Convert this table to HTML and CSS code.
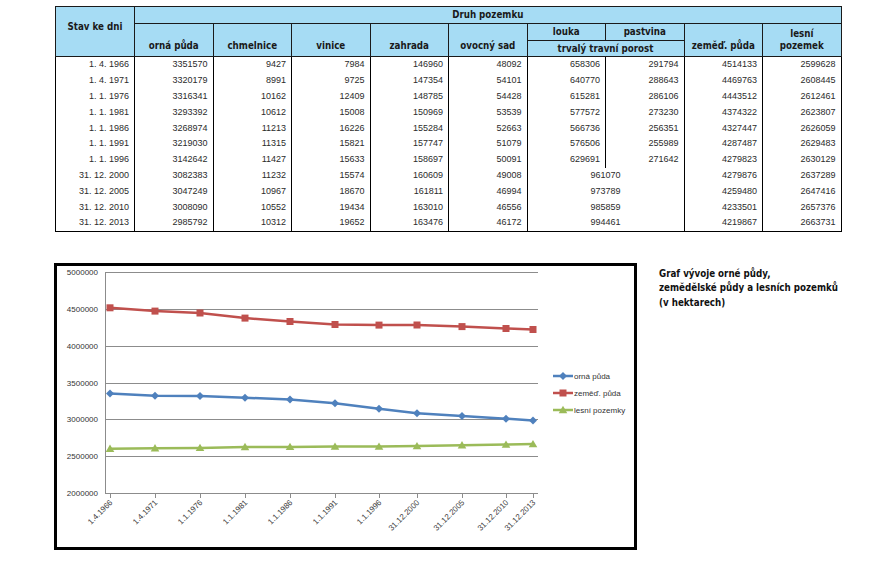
FILE: index.html
```html
<!DOCTYPE html>
<html lang="cs">
<head>
<meta charset="utf-8">
<title>Druh pozemku</title>
<link rel="stylesheet" href="styles.css">
</head>
<body>
<div class="page">
  <table class="land">
    <colgroup>
      <col class="c-first"><col><col><col><col><col><col><col><col><col>
    </colgroup>
    <thead>
      <tr class="h1">
        <th rowspan="3" class="stav">Stav ke dni</th>
        <th colspan="9">Druh pozemku</th>
      </tr>
      <tr class="h2">
        <th rowspan="2" class="low">orná půda</th>
        <th rowspan="2" class="low">chmelnice</th>
        <th rowspan="2" class="low">vinice</th>
        <th rowspan="2" class="low">zahrada</th>
        <th rowspan="2" class="low">ovocný sad</th>
        <th>louka</th>
        <th>pastvina</th>
        <th rowspan="2" class="low">zeměď. půda</th>
        <th rowspan="2" class="low">lesní<br>pozemek</th>
      </tr>
      <tr class="h3">
        <th colspan="2">trvalý travní porost</th>
      </tr>
    </thead>
    <tbody>
      <tr><td>1. 4. 1966</td><td>3351570</td><td>9427</td><td>7984</td><td>146960</td><td>48092</td><td>658306</td><td>291794</td><td>4514133</td><td>2599628</td></tr>
      <tr><td>1. 4. 1971</td><td>3320179</td><td>8991</td><td>9725</td><td>147354</td><td>54101</td><td>640770</td><td>288643</td><td>4469763</td><td>2608445</td></tr>
      <tr><td>1. 1. 1976</td><td>3316341</td><td>10162</td><td>12409</td><td>148785</td><td>54428</td><td>615281</td><td>286106</td><td>4443512</td><td>2612461</td></tr>
      <tr><td>1. 1. 1981</td><td>3293392</td><td>10612</td><td>15008</td><td>150969</td><td>53539</td><td>577572</td><td>273230</td><td>4374322</td><td>2623807</td></tr>
      <tr><td>1. 1. 1986</td><td>3268974</td><td>11213</td><td>16226</td><td>155284</td><td>52663</td><td>566736</td><td>256351</td><td>4327447</td><td>2626059</td></tr>
      <tr><td>1. 1. 1991</td><td>3219030</td><td>11315</td><td>15821</td><td>157747</td><td>51079</td><td>576506</td><td>255989</td><td>4287487</td><td>2629483</td></tr>
      <tr><td>1. 1. 1996</td><td>3142642</td><td>11427</td><td>15633</td><td>158697</td><td>50091</td><td>629691</td><td>271642</td><td>4279823</td><td>2630129</td></tr>
      <tr><td>31. 12. 2000</td><td>3082383</td><td>11232</td><td>15574</td><td>160609</td><td>49008</td><td colspan="2" class="merged">961070</td><td>4279876</td><td>2637289</td></tr>
      <tr><td>31. 12. 2005</td><td>3047249</td><td>10967</td><td>18670</td><td>161811</td><td>46994</td><td colspan="2" class="merged">973789</td><td>4259480</td><td>2647416</td></tr>
      <tr><td>31. 12. 2010</td><td>3008090</td><td>10552</td><td>19434</td><td>163010</td><td>46556</td><td colspan="2" class="merged">985859</td><td>4233501</td><td>2657376</td></tr>
      <tr><td>31. 12. 2013</td><td>2985792</td><td>10312</td><td>19652</td><td>163476</td><td>46172</td><td colspan="2" class="merged">994461</td><td>4219867</td><td>2663731</td></tr>
    </tbody>
  </table>

  <div class="lower">
    <div class="chart">
      <svg class="chart-svg" width="577" height="281" viewBox="57 265 577 281" xmlns="http://www.w3.org/2000/svg">
        <defs>
          <path id="dia" d="M0,-4 L4,0 L0,4 L-4,0Z"/>
          <rect id="sq" x="-3.5" y="-3.5" width="7" height="7"/>
          <path id="tri" d="M0,-4.2 L4.3,3.2 L-4.3,3.2Z"/>
        </defs>
        <g stroke="#8c8c8c" stroke-width="1" shape-rendering="crispEdges">
          <line x1="105" y1="271.5" x2="538" y2="271.5"/>
          <line x1="105" y1="308.5" x2="538" y2="308.5"/>
          <line x1="105" y1="345.5" x2="538" y2="345.5"/>
          <line x1="105" y1="382.5" x2="538" y2="382.5"/>
          <line x1="105" y1="418.5" x2="538" y2="418.5"/>
          <line x1="105" y1="455.5" x2="538" y2="455.5"/>
          <line x1="105" y1="492.5" x2="538" y2="492.5"/>
          <line x1="105.5" y1="271" x2="105.5" y2="492"/>
          <line x1="110.5" y1="492" x2="110.5" y2="497"/>
          <line x1="155.5" y1="492" x2="155.5" y2="497"/>
          <line x1="200.5" y1="492" x2="200.5" y2="497"/>
          <line x1="245.5" y1="492" x2="245.5" y2="497"/>
          <line x1="290.5" y1="492" x2="290.5" y2="497"/>
          <line x1="335.5" y1="492" x2="335.5" y2="497"/>
          <line x1="379.5" y1="492" x2="379.5" y2="497"/>
          <line x1="417.5" y1="492" x2="417.5" y2="497"/>
          <line x1="462.5" y1="492" x2="462.5" y2="497"/>
          <line x1="506.5" y1="492" x2="506.5" y2="497"/>
          <line x1="533.5" y1="492" x2="533.5" y2="497"/>
        </g>
        <g class="ylab" text-anchor="end">
          <text x="98" y="274">5000000</text>
          <text x="98" y="311">4500000</text>
          <text x="98" y="348">4000000</text>
          <text x="98" y="385">3500000</text>
          <text x="98" y="421">3000000</text>
          <text x="98" y="458">2500000</text>
          <text x="98" y="495">2000000</text>
        </g>
        <g class="xlab" text-anchor="end">
          <text transform="translate(113,502) rotate(-45)">1.4.1966</text>
          <text transform="translate(158,502) rotate(-45)">1.4.1971</text>
          <text transform="translate(203,502) rotate(-45)">1.1.1976</text>
          <text transform="translate(248,502) rotate(-45)">1.1.1981</text>
          <text transform="translate(293,502) rotate(-45)">1.1.1986</text>
          <text transform="translate(338,502) rotate(-45)">1.1.1991</text>
          <text transform="translate(382,502) rotate(-45)">1.1.1996</text>
          <text transform="translate(420,502) rotate(-45)">31.12.2000</text>
          <text transform="translate(465,502) rotate(-45)">31.12.2005</text>
          <text transform="translate(509,502) rotate(-45)">31.12.2010</text>
          <text transform="translate(536,502) rotate(-45)">31.12.2013</text>
        </g>
        <polyline fill="none" stroke="#c0504d" stroke-width="2.5" points="110,306.8 155,310.1 200,312 245,317.1 290,320.5 335,323.5 379,324.1 417,324 462,325.6 506,327.5 533,328.5"/>
        <polyline fill="none" stroke="#4f81bd" stroke-width="2.5" points="110,392.4 155,394.7 200,395 245,396.7 290,398.5 335,402.2 379,407.8 417,412.3 462,414.9 506,417.7 533,419.4"/>
        <polyline fill="none" stroke="#9bbb59" stroke-width="2.5" points="110,447.8 155,447.2 200,446.9 245,446 290,445.9 335,445.6 379,445.6 417,445.1 462,444.3 506,443.6 533,443.1"/>
        <g fill="#c0504d">
          <use href="#sq" x="110" y="306.8"/><use href="#sq" x="155" y="310.1"/><use href="#sq" x="200" y="312"/>
          <use href="#sq" x="245" y="317.1"/><use href="#sq" x="290" y="320.5"/><use href="#sq" x="335" y="323.5"/>
          <use href="#sq" x="379" y="324.1"/><use href="#sq" x="417" y="324"/><use href="#sq" x="462" y="325.6"/>
          <use href="#sq" x="506" y="327.5"/><use href="#sq" x="533" y="328.5"/>
        </g>
        <g fill="#4f81bd">
          <use href="#dia" x="110" y="392.4"/><use href="#dia" x="155" y="394.7"/><use href="#dia" x="200" y="395"/>
          <use href="#dia" x="245" y="396.7"/><use href="#dia" x="290" y="398.5"/><use href="#dia" x="335" y="402.2"/>
          <use href="#dia" x="379" y="407.8"/><use href="#dia" x="417" y="412.3"/><use href="#dia" x="462" y="414.9"/>
          <use href="#dia" x="506" y="417.7"/><use href="#dia" x="533" y="419.4"/>
        </g>
        <g fill="#9bbb59">
          <use href="#tri" x="110" y="447.8"/><use href="#tri" x="155" y="447.2"/><use href="#tri" x="200" y="446.9"/>
          <use href="#tri" x="245" y="446"/><use href="#tri" x="290" y="445.9"/><use href="#tri" x="335" y="445.6"/>
          <use href="#tri" x="379" y="445.6"/><use href="#tri" x="417" y="445.1"/><use href="#tri" x="462" y="444.3"/>
          <use href="#tri" x="506" y="443.6"/><use href="#tri" x="533" y="443.1"/>
        </g>
        <g class="legend">
          <line x1="553" y1="375" x2="573" y2="375" stroke="#4f81bd" stroke-width="2.5"/>
          <use href="#dia" x="563" y="375" fill="#4f81bd"/>
          <text x="574" y="378">orná půda</text>
          <line x1="553" y1="392" x2="573" y2="392" stroke="#c0504d" stroke-width="2.5"/>
          <use href="#sq" x="563" y="392" fill="#c0504d"/>
          <text x="574" y="395">zeměď. půda</text>
          <line x1="553" y1="409" x2="573" y2="409" stroke="#9bbb59" stroke-width="2.5"/>
          <use href="#tri" x="563" y="409" fill="#9bbb59"/>
          <text x="574" y="412">lesní pozemky</text>
        </g>
      </svg>
    </div>
    <div class="caption">Graf vývoje orné půdy,<br>zemědělské půdy a lesních pozemků<br>(v hektarech)</div>
  </div>
</div>
</body>
</html>
```
FILE: styles.css
```css
html, body {
  margin: 0;
  padding: 0;
  background: #ffffff;
}

.page {
  padding: 6px 0 0 55px;
  font-family: "Liberation Sans", Arial, sans-serif;
}

.land {
  border-collapse: collapse;
  width: 786px;
  table-layout: fixed;
  border: 1px solid #000;
}

.land col { width: 78.5px; }
.land col.c-first { width: 79px; }

.land th {
  background: #a6dcf4;
  border: 1px solid #1a1a1a;
  font-family: "DejaVu Sans Condensed", "DejaVu Sans", sans-serif;
  font-weight: bold;
  font-size: 9.7px;
  color: #1a1a1a;
  text-align: center;
  padding: 0 2px;
  line-height: 12px;
}

.land tr.h1 th { height: 16px; }
.land tr.h2 th { height: 16px; }
.land tr.h3 th { height: 15px; }

.land th.stav {
  vertical-align: top;
  padding-top: 14px;
}

.land th.low {
  vertical-align: bottom;
  padding-bottom: 4px;
}

.land td {
  font-size: 9px;
  color: #2b2b2b;
  text-align: right;
  padding: 0 5px 0 0;
  height: 15.8px;
  line-height: 11px;
  border-left: 1px solid #000;
  border-right: 1px solid #000;
  white-space: nowrap;
}

.land td.merged {
  text-align: center;
  padding-right: 0;
}

.lower {
  display: flex;
  align-items: flex-start;
  margin-top: 31px;
  margin-left: -1px;
}

.chart {
  width: 583px;
  height: 287px;
  box-sizing: border-box;
  border: 3px solid #000;
  background: #fff;
}

.chart-svg {
  display: block;
}

.ylab text, .legend text {
  font-family: "Liberation Sans", Arial, sans-serif;
  font-size: 8px;
  fill: #333;
}

.xlab text {
  font-family: "Liberation Sans", Arial, sans-serif;
  font-size: 8px;
  fill: #404040;
}

.caption {
  margin-left: 22px;
  padding-top: 4px;
  font-family: "DejaVu Sans Condensed", "DejaVu Sans", sans-serif;
  font-weight: bold;
  font-size: 9.7px;
  line-height: 14.5px;
  color: #111;
}
```
